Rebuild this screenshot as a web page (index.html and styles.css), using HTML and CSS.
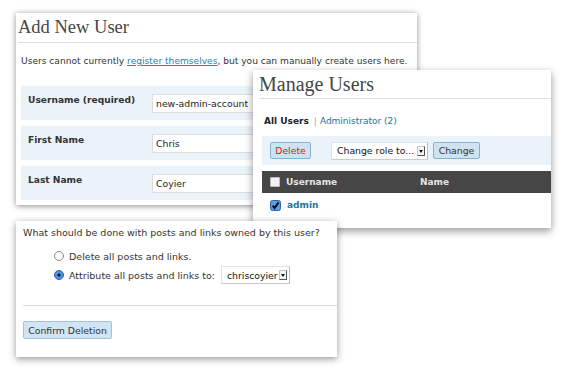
FILE: index.html
```html
<!DOCTYPE html>
<html>
<head>
<meta charset="utf-8">
<link rel="stylesheet" href="styles.css">
</head>
<body>
<div class="canvas">
  <section class="win win-add">
    <header class="win-head head-add"><h2 class="title title-add">Add New User</h2></header>
    <p class="intro">Users cannot currently <a class="link" href="#">register themselves</a>, but you can manually create users here.</p>
    <div class="form">
      <div class="row"><span class="label">Username (required)</span><span class="input">new-admin-account</span></div>
      <div class="row"><span class="label">First Name</span><span class="input">Chris</span></div>
      <div class="row"><span class="label">Last Name</span><span class="input">Coyier</span></div>
    </div>
  </section>

  <section class="win win-manage">
    <header class="win-head head-manage"><h2 class="title title-manage">Manage Users</h2></header>
    <div class="tabs"><span class="tab-current">All Users</span><span class="sep">|</span><a class="tab-link" href="#">Administrator (2)</a></div>
    <div class="actions">
      <span class="btn btn-delete">Delete</span>
      <span class="select select-role">Change role to...<span class="sel-arrow"></span></span>
      <span class="btn btn-change">Change</span>
    </div>
    <div class="thead">
      <span class="cb-cell"><span class="cb-empty"></span></span>
      <span class="th th-user">Username</span>
      <span class="th">Name</span>
    </div>
    <div class="trow">
      <span class="cb-cell"><svg class="cb-checked" width="11" height="11" viewBox="0 0 11 11"><rect x="0.5" y="0.5" width="10" height="10" rx="2" fill="#5d9ce0" stroke="#2f64a8"/><path d="M2.6 5.6 L4.6 8 L8.6 2.4" fill="none" stroke="#111" stroke-width="2"/></svg></span>
      <a class="user-link" href="#">admin</a>
    </div>
  </section>

  <section class="win win-delete">
    <p class="question">What should be done with posts and links owned by this user?</p>
    <div class="opts">
      <div class="opt"><svg class="radio" width="10" height="10" viewBox="0 0 10 10"><circle cx="5" cy="5" r="4.5" fill="#fafafa" stroke="#8a8a8a"/></svg><span>Delete all posts and links.</span></div>
      <div class="opt"><svg class="radio" width="10" height="10" viewBox="0 0 10 10"><circle cx="5" cy="5" r="4.5" fill="#4f93dc" stroke="#2d63a6"/><circle cx="5" cy="5" r="1.6" fill="#111"/></svg><span>Attribute all posts and links to:</span><span class="select select-user">chriscoyier<span class="sel-arrow"></span></span></div>
    </div>
    <hr class="rule">
    <span class="btn btn-confirm">Confirm Deletion</span>
  </section>
</div>
</body>
</html>
```

FILE: styles.css
```css
html, body { margin: 0; padding: 0; background: #fff; }
body { font-family: "DejaVu Sans", sans-serif; font-size: 9.3px; color: #333; }
.canvas { position: relative; width: 570px; height: 374px; overflow: hidden; }

.win { position: absolute; background: #fff; box-sizing: border-box; white-space: nowrap; }
.win-add { left: 16px; top: 13px; width: 401px; height: 192px; font-size: 9.1px; box-shadow: 0 1px 6px rgba(0,0,0,0.45); }
.win-manage { left: 253px; top: 70px; width: 298px; height: 158px; font-size: 9px; box-shadow: 0 3px 8px rgba(0,0,0,0.42); }
.win-delete { left: 16px; top: 221px; width: 321px; height: 136px; font-size: 9.5px; box-shadow: 0 2px 7px rgba(0,0,0,0.42); }

.win-head { border-bottom: 1px solid #dedede; }
.head-add { margin-left: 2px; height: 29px; }
.head-manage { margin-left: 6px; height: 28px; }
.title { margin: 0; font-family: "Liberation Serif", serif; font-weight: normal; color: #464646; }
.title-add { font-size: 18.5px; line-height: 29px; }
.title-manage { font-size: 20px; line-height: 28px; }

.intro { margin: 11px 0 0 5px; line-height: 14px; }
.link { color: #2a80b0; text-decoration: underline; }

.form { margin: 18px 6px 0 5px; display: flex; flex-direction: column; gap: 6px; }
.row { height: 34px; background: #eaf2fa; display: flex; align-items: flex-start; box-sizing: border-box; padding: 7px 0 0 7px; }
.label { width: 124px; flex: none; font-weight: bold; line-height: 14px; color: #333; }
.input { margin-top: 1px; height: 19px; flex: 1; box-sizing: border-box; background: #fff; border: 1px solid #dcdcdc; padding: 0 3px; line-height: 17px; font-size: 9.3px; color: #222; overflow: hidden; }

.tabs { margin: 15px 0 0 11px; line-height: 14px; display: flex; align-items: center; }
.tab-current { font-weight: bold; color: #222; }
.sep { color: #aaa; margin: 0 3px 0 5px; }
.tab-link { color: #21759b; text-decoration: none; }

.actions { margin: 8px 0 0 9px; height: 29px; background: #eaf2fa; display: flex; align-items: center; padding-left: 8px; box-sizing: border-box; }
.btn { display: inline-flex; align-items: center; justify-content: center; box-sizing: border-box; height: 17px; background: #cfe2f0; border: 1px solid #86b2d2; border-radius: 2px; color: #333; font-size: 9.3px; }
.btn-delete { width: 41px; color: #f01010; }
.btn-change { width: 47px; margin-left: 5px; }
.select { position: relative; display: inline-flex; align-items: center; box-sizing: border-box; height: 18px; background: #fff; border: 1px solid #e2e2e2; border-right-color: #bbb; border-bottom-color: #ccc; padding-left: 5px; color: #111; font-size: 9.3px; overflow: hidden; }
.select-role { width: 97px; margin-left: 20px; }
.sel-arrow { position: absolute; right: 2px; top: 3px; width: 8px; height: 10px; box-sizing: border-box; border: 1px solid #c8c8c8; border-right-color: #555; border-bottom-color: #555; background: #f6f6f6; }
.sel-arrow::after { content: ""; position: absolute; left: 1px; top: 3px; border-left: 2.5px solid transparent; border-right: 2.5px solid transparent; border-top: 3px solid #111; }

.thead { margin: 6px 0 0 9px; height: 22px; background: #464646; display: flex; align-items: center; }
.cb-cell { width: 24px; padding-left: 8px; box-sizing: border-box; display: flex; align-items: center; }
.cb-empty { width: 8px; height: 8px; background: #f2f2f2; border: 1px solid #bbb; border-radius: 1px; }
.th { font-weight: bold; color: #e4e4e4; }
.th-user { width: 134px; }

.trow { margin-left: 9px; height: 24px; display: flex; align-items: center; }
.cb-checked { display: block; }
.user-link { color: #21759b; font-weight: bold; text-decoration: none; margin-left: 1px; }

.question { margin: 5px 0 0 7px; line-height: 14px; }
.opts { margin: 9px 0 0 38px; display: flex; flex-direction: column; gap: 5px; }
.opt { display: flex; align-items: center; height: 14px; }
.radio { margin-right: 5px; display: block; }
.select-user { width: 69px; margin-left: 6px; }
.rule { margin: 23px 0 0 7px; border: 0; border-top: 1px solid #dcdcdc; height: 0; }
.btn-confirm { margin: 15px 0 0 7px; width: 89px; height: 18px; background: #d1e4f3; border-color: #a3c3dc; }
```
